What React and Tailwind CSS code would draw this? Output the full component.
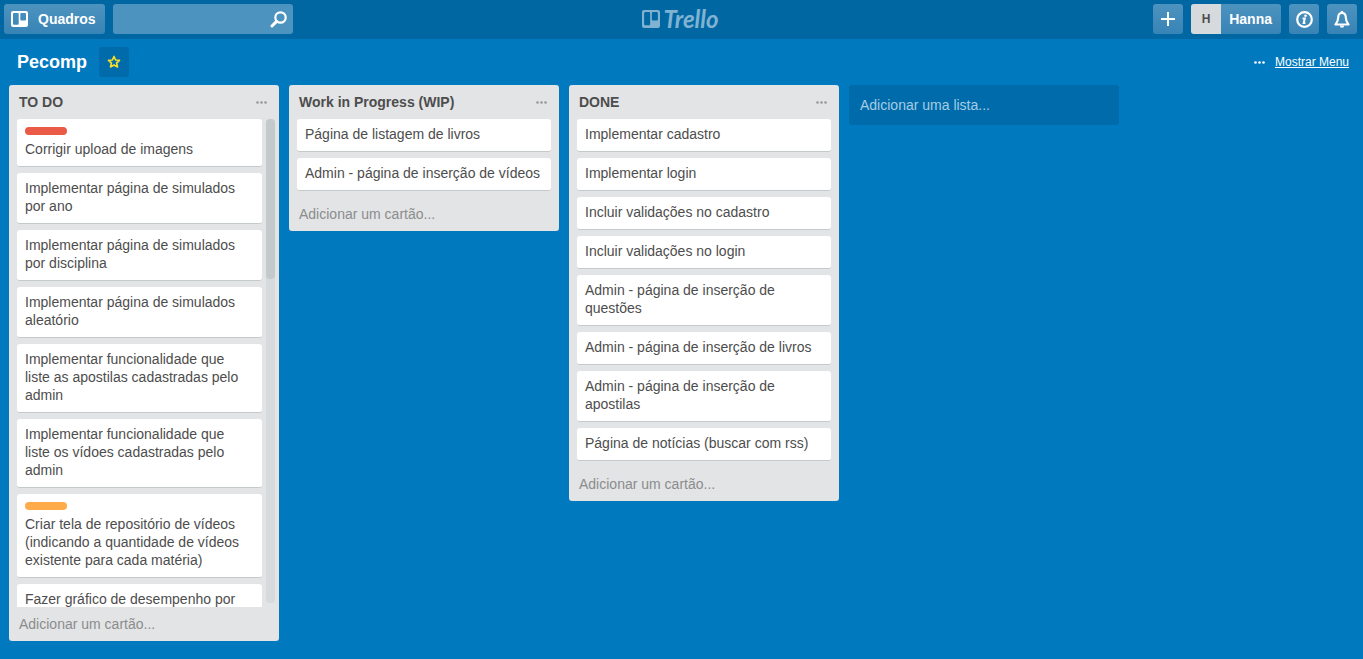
import React from 'react';

const lists = [
  {
    title: 'TO DO',
    scrolls: true,
    cards: [
      { text: 'Corrigir upload de imagens', label: 'bg-[#eb5a46]' },
      { text: 'Implementar página de simulados por ano' },
      { text: 'Implementar página de simulados por disciplina' },
      { text: 'Implementar página de simulados aleatório' },
      { text: 'Implementar funcionalidade que liste as apostilas cadastradas pelo admin' },
      { text: 'Implementar funcionalidade que liste os vídoes cadastradas pelo admin' },
      {
        text: 'Criar tela de repositório de vídeos (indicando a quantidade de vídeos existente para cada matéria)',
        label: 'bg-[#ffab4a]',
      },
      { text: 'Fazer gráfico de desempenho por' },
    ],
  },
  {
    title: 'Work in Progress (WIP)',
    cards: [
      { text: 'Página de listagem de livros' },
      { text: 'Admin - página de inserção de vídeos' },
    ],
  },
  {
    title: 'DONE',
    cards: [
      { text: 'Implementar cadastro' },
      { text: 'Implementar login' },
      { text: 'Incluir validações no cadastro' },
      { text: 'Incluir validações no login' },
      { text: 'Admin - página de inserção de questões' },
      { text: 'Admin - página de inserção de livros' },
      { text: 'Admin - página de inserção de apostilas' },
      { text: 'Página de notícias (buscar com rss)' },
    ],
  },
];

const headerButton =
  'flex h-[30px] shrink-0 items-center rounded-[3px] bg-linear-to-b from-[#4d93bf] to-[#3784b6] text-sm font-bold text-white';

function BoardIcon({ className }) {
  return (
    <svg className={className} viewBox="0 0 17 17" preserveAspectRatio="none" fill="currentColor" fillRule="evenodd" aria-hidden="true">
      <path d="M2 0h13a2 2 0 0 1 2 2v13a2 2 0 0 1-2 2H2a2 2 0 0 1-2-2V2a2 2 0 0 1 2-2zM3 2a1 1 0 0 0-1 1v10.500a1 1 0 0 0 1 1h3.700a1 1 0 0 0 1-1V3a1 1 0 0 0-1-1zM10.300 2a1 1 0 0 0-1 1v6a1 1 0 0 0 1 1H14a1 1 0 0 0 1-1V3a1 1 0 0 0-1-1z" />
    </svg>
  );
}

function Dots({ className }) {
  return (
    <svg className={className} width="11" height="3" viewBox="0 0 11 3" fill="currentColor" aria-hidden="true">
      <circle cx="1.500" cy="1.500" r="1.300" />
      <circle cx="5.500" cy="1.500" r="1.300" />
      <circle cx="9.500" cy="1.500" r="1.300" />
    </svg>
  );
}

function Header() {
  return (
    <header className="grid h-[39px] shrink-0 grid-cols-[1fr_auto_1fr] items-start bg-[#0067a3] pt-1 pr-1.5 pl-1">
      <div className="flex gap-2">
        <button type="button" className={`${headerButton} gap-2.5 pr-[9px] pl-[7px]`}>
          <BoardIcon className="h-4 w-[17px]" />
          Quadros
        </button>
        <form role="search" className="flex h-[30px] w-[180px] items-center rounded-[3px] bg-[#4d93bf] pr-1.5 text-white">
          <input type="search" aria-label="Buscar" className="h-full min-w-0 flex-1 bg-transparent px-2 text-sm outline-none" />
          <button type="submit" aria-label="Buscar">
            <svg width="17" height="17" viewBox="0 0 17 17" fill="none" stroke="currentColor" aria-hidden="true">
              <circle cx="10.500" cy="6.500" r="5.200" strokeWidth="2.200" />
              <path d="M6.600 10.400 2 15" strokeWidth="3" strokeLinecap="round" />
            </svg>
          </button>
        </form>
      </div>
      <a href="#" className="flex h-[30px] items-center gap-[3px] text-[#80b3d1]">
        <BoardIcon className="h-[18px] w-[18px]" />
        <span className="font-[Lato,sans-serif] text-2xl leading-none font-bold italic">Trello</span>
      </a>
      <div className="flex justify-end gap-2">
        <button type="button" aria-label="Criar" className={`${headerButton} w-[30px] justify-center`}>
          <svg width="14" height="14" viewBox="0 0 14 14" stroke="currentColor" strokeWidth="2" aria-hidden="true">
            <path d="M7 0v14M0 7h14" />
          </svg>
        </button>
        <button type="button" className={`${headerButton} gap-2 overflow-hidden pr-[9px]`}>
          <span className="flex h-full w-[30px] items-center justify-center bg-[#d6dadc] text-xs text-[#4d4d4d]">H</span>
          Hanna
        </button>
        <button type="button" aria-label="Informações" className={`${headerButton} w-[30px] justify-center`}>
          <svg width="17" height="17" viewBox="0 0 17 17" fill="none" stroke="currentColor" aria-hidden="true">
            <circle cx="8.500" cy="8.500" r="7.300" strokeWidth="2.200" />
            <path d="M6.600 7.400h2.200L7.700 12h1.700" strokeWidth="2" />
            <circle cx="9.500" cy="4.800" r="1.300" fill="currentColor" stroke="none" />
          </svg>
        </button>
        <button type="button" aria-label="Notificações" className={`${headerButton} w-[30px] justify-center`}>
          <svg width="16" height="17" viewBox="0 0 16 17" fill="none" stroke="currentColor" strokeWidth="2.200" strokeLinejoin="round" aria-hidden="true">
            <path d="M8 2C5.300 2 4.200 4 4.200 6.500 4.200 10 3 11.500 1.500 13.500h13C13 11.500 11.800 10 11.800 6.500 11.800 4 10.700 2 8 2z" />
            <path d="M8 0v2" />
            <path d="M5.800 14.500h4.400a2.200 2.200 0 0 1-4.400 0z" fill="currentColor" stroke="none" />
          </svg>
        </button>
      </div>
    </header>
  );
}

function Card({ text, label, narrow }) {
  return (
    <li className={`shrink-0 rounded-[3px] border-b border-[#c4c9cc] bg-white pt-1.5 pb-2 pl-2 ${narrow ? 'pr-3' : 'pr-2'}`}>
      {label && <div className={`mt-0.5 mb-[5px] h-2 w-[42px] rounded ${label}`} />}
      {text}
    </li>
  );
}

function List({ title, cards, scrolls }) {
  return (
    <section className="flex max-h-full w-[270px] shrink-0 flex-col rounded-[3px] bg-[#e2e4e6] text-sm leading-[18px] text-[#4d4d4d]">
      <div className="flex h-[34px] shrink-0 items-center justify-between pr-3 pl-2.5">
        <h2 className="font-bold">{title}</h2>
        <button type="button" aria-label="Ações da lista" className="text-[#999999]">
          <Dots />
        </button>
      </div>
      <div className={`flex min-h-0 pl-2 ${scrolls ? 'gap-1 pr-1' : 'pr-2'}`}>
        <ul className={`flex min-w-0 flex-1 flex-col gap-1.5 ${scrolls ? 'overflow-y-auto [scrollbar-width:none]' : 'pb-1.5'}`}>
          {cards.map((card) => (
            <Card key={card.text} narrow={scrolls} {...card} />
          ))}
        </ul>
        {scrolls && (
          <div className="mb-1 w-[9px] shrink-0 rounded bg-[#d6dadc]">
            <div className="h-[33%] rounded bg-[#c4c9cc]" />
          </div>
        )}
      </div>
      <button type="button" className="shrink-0 px-2.5 py-2 text-left text-[#8c8c8c]">
        Adicionar um cartão...
      </button>
    </section>
  );
}

export default function App() {
  return (
    <div className="flex h-screen flex-col overflow-hidden bg-[#0079bf] font-['Liberation_Sans',Arial,sans-serif]">
      <Header />
      <div className="flex h-[46px] shrink-0 items-center justify-between pr-3.5 pl-[17px] text-white">
        <div className="flex items-center gap-3">
          <h1 className="text-lg font-bold">Pecomp</h1>
          <button type="button" aria-label="Favorito" className="flex size-[30px] items-center justify-center rounded-[3px] bg-[#006bab] text-[#f5dd29]">
            <svg width="14" height="14" viewBox="0 0 14 14" fill="none" stroke="currentColor" strokeWidth="1.700" strokeLinejoin="round" aria-hidden="true">
              <path d="M7 1.500 8.600 5l3.900.400-2.900 2.600.9 3.900L7 9.900l-3.500 2 .9-3.900L1.500 5.400 5.400 5z" />
            </svg>
          </button>
        </div>
        <a href="#" className="flex items-center gap-2.5 text-xs">
          <Dots />
          <span className="underline">Mostrar Menu</span>
        </a>
      </div>
      <main className="flex min-h-0 flex-1 items-start gap-2.5 overflow-x-auto px-[9px] pb-[18px] [scrollbar-width:none]">
        {lists.map((list) => (
          <List key={list.title} {...list} />
        ))}
        <button type="button" className="h-10 w-[270px] shrink-0 rounded-[3px] bg-[#006bab] px-[11px] text-left text-sm text-[#a6cbe3]">
          Adicionar uma lista...
        </button>
      </main>
    </div>
  );
}
